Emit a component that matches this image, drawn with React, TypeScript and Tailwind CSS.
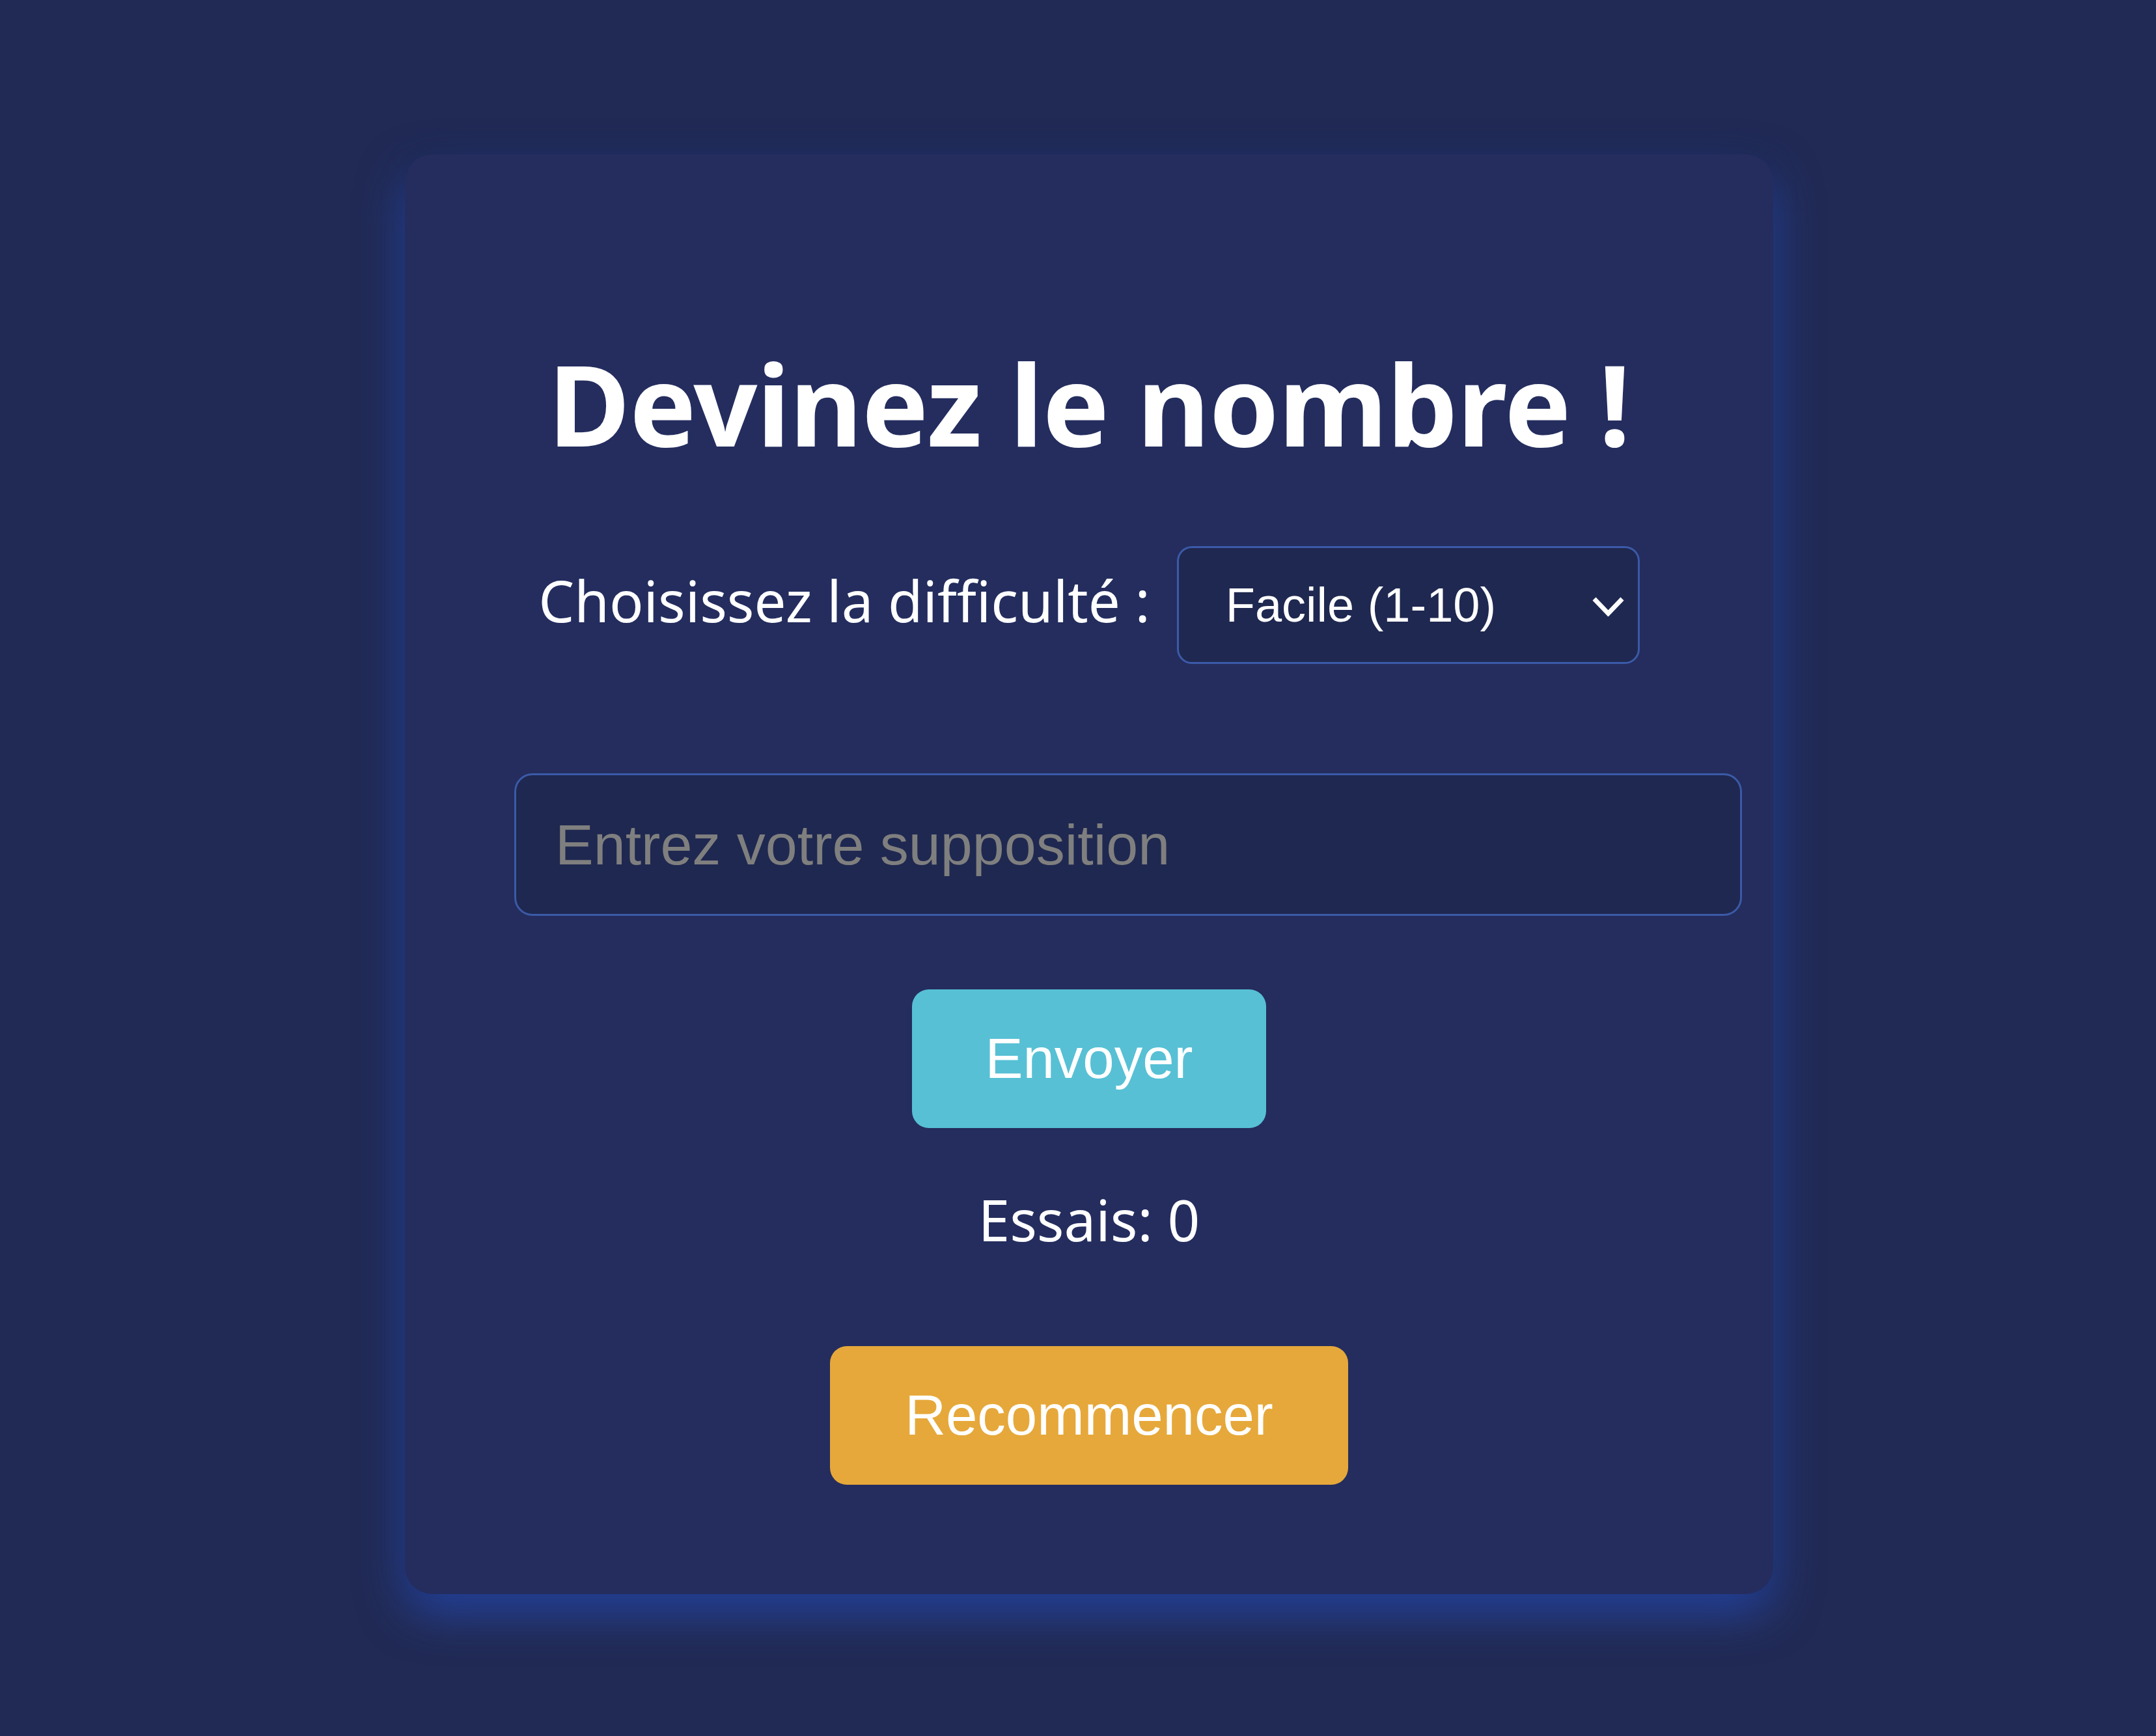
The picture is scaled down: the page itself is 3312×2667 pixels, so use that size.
import React from "react";

export default function App() {
  return (
    <div className="min-h-[2667px] w-full bg-[#212a54] pt-[237px] pl-[34px] flex justify-center items-start">
      <div className="w-[2102px] bg-[#242d5e] rounded-[42px] px-[168px] pt-[296px] pb-[168px] flex flex-col items-center shadow-[0_28px_70px_rgba(40,90,220,0.55),0_0_40px_rgba(0,0,0,0.18)]">
        <h1 className="font-['Trebuchet_MS','Noto_Sans',sans-serif] text-[172px] leading-[172px] font-bold tracking-[-1px] text-white whitespace-nowrap">
          Devinez le nombre !
        </h1>

        <div className="mt-[134px] h-[181px] flex items-start justify-center gap-[41px]">
          <label className="font-['Trebuchet_MS','Noto_Sans',sans-serif] text-[87px] leading-[167px] text-white whitespace-nowrap">
            Choisissez la difficulté :
          </label>
          <div className="relative w-[711px] h-[181px]">
            <select
              defaultValue="facile"
              className="appearance-none w-[711px] h-[181px] border-[3px] border-[#3b5aa8] rounded-[23px] bg-[#1f2850] pl-[72px] font-['Liberation_Sans',Arial,sans-serif] text-[74px] text-white outline-none"
            >
              <option value="facile">Facile (1-10)</option>
              <option value="moyen">Moyen (1-50)</option>
              <option value="difficile">Difficile (1-100)</option>
            </select>
            <svg
              className="absolute right-[23px] top-[77px] pointer-events-none"
              width="51"
              height="31"
              viewBox="0 0 51 31"
              fill="none"
            >
              <polyline
                points="4,4 25.5,26.5 47,4"
                stroke="#ffffff"
                strokeWidth="7"
                strokeLinecap="butt"
                strokeLinejoin="miter"
              />
            </svg>
          </div>
        </div>

        <input
          type="number"
          placeholder="Entrez votre supposition"
          className="self-start mt-[168px] w-[1886px] h-[219px] shrink-0 border-[3px] border-[#3b5aa8] rounded-[28px] bg-[#1f2850] pl-[60px] font-['Liberation_Sans',Arial,sans-serif] text-[88px] text-white placeholder:text-[#7f7f7f] outline-none"
        />

        <button className="mt-[113px] w-[544px] h-[213px] rounded-[26px] bg-[#57c0d5] font-['Liberation_Sans',Arial,sans-serif] text-[87px] text-white">
          Envoyer
        </button>

        <p className="mt-[80px] font-['Trebuchet_MS','Noto_Sans',sans-serif] text-[87px] leading-[120px] text-white whitespace-nowrap">
          Essais: 0
        </p>

        <button className="mt-[135px] w-[796px] h-[213px] rounded-[26px] bg-[#e6a83a] font-['Liberation_Sans',Arial,sans-serif] text-[87px] text-white">
          Recommencer
        </button>
      </div>
    </div>
  );
}
